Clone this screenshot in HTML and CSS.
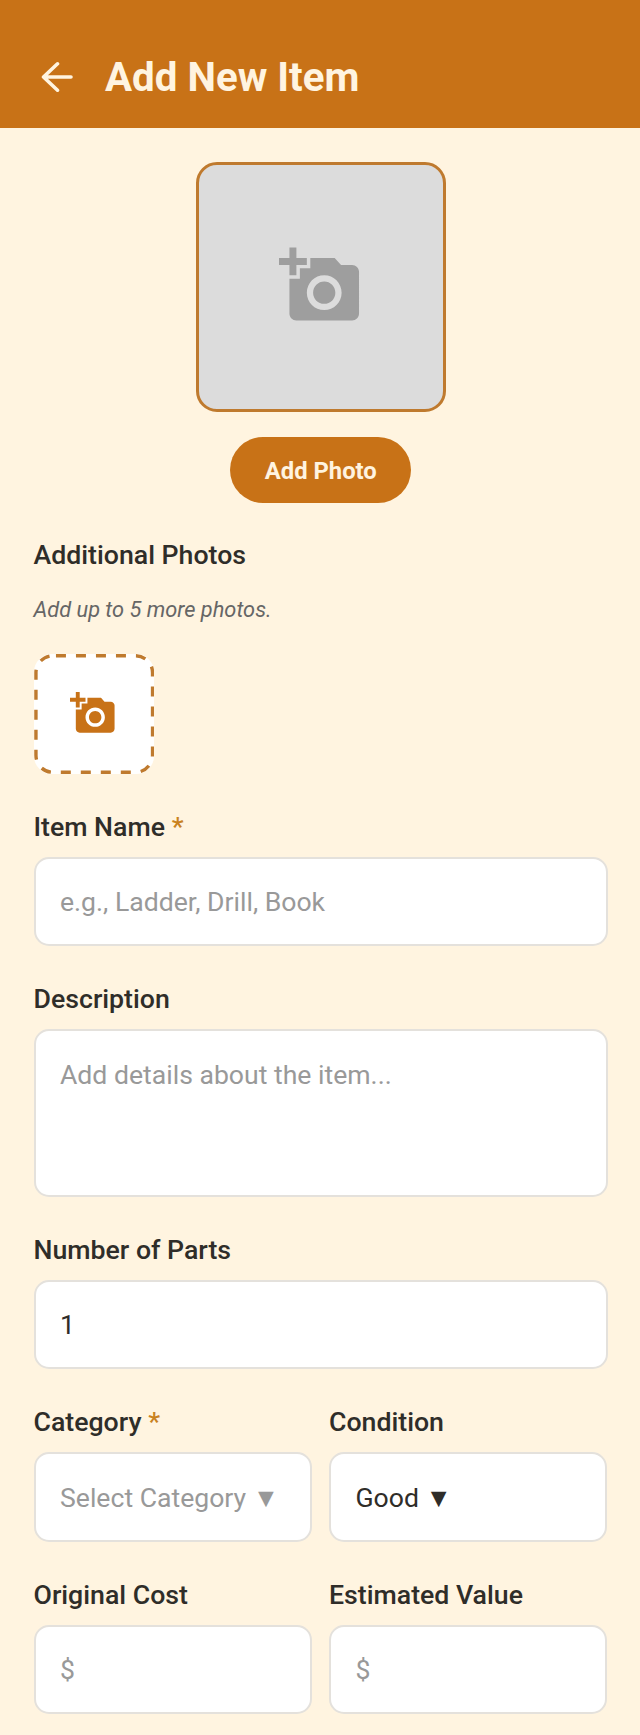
FILE: index.html
```html
<!DOCTYPE html>
<html lang="en">
<head>
<meta charset="utf-8">
<title>Add New Item</title>
<link rel="stylesheet" href="styles.css">
</head>
<body>
<header class="topbar">
  <svg class="back" viewBox="0 0 32 32" aria-hidden="true"><path d="M30 16H2.5M16.5 2.8 2.5 16l14 13.2"/></svg>
  <h1 class="title">Add New Item</h1>
</header>
<main class="form">
  <section class="photo-block">
    <div class="photo-box">
      <svg class="icon icon-lg" viewBox="0 0 24 24" aria-hidden="true"><path d="M3 4V1h2v3h3v2H5v3H3V6H0V4h3zm3 6V7h3V4h7l1.83 2H21c1.1 0 2 .9 2 2v12c0 1.1-.9 2-2 2H5c-1.1 0-2-.9-2-2V10h3zm7 9c2.76 0 5-2.24 5-5s-2.24-5-5-5-5 2.24-5 5 2.24 5 5 5zm-3.2-5c0 1.77 1.43 3.2 3.2 3.2s3.2-1.43 3.2-3.2-1.43-3.2-3.2-3.2-3.2 1.43-3.2 3.2z"/></svg>
    </div>
    <button class="add-btn" type="button">Add Photo</button>
  </section>

  <section class="extra">
    <div class="label">Additional Photos</div>
    <p class="hint">Add up to 5 more photos.</p>
    <div class="thumb-add">
      <svg class="thumb-dash" viewBox="0 0 120 120" aria-hidden="true"><rect x="1.7" y="1.7" width="116.6" height="116.6" rx="17" ry="17"/></svg>
      <svg class="icon icon-sm" viewBox="0 0 24 24" aria-hidden="true"><path d="M3 4V1h2v3h3v2H5v3H3V6H0V4h3zm3 6V7h3V4h7l1.83 2H21c1.1 0 2 .9 2 2v12c0 1.1-.9 2-2 2H5c-1.1 0-2-.9-2-2V10h3zm7 9c2.76 0 5-2.24 5-5s-2.24-5-5-5-5 2.24-5 5 2.24 5 5 5zm-3.2-5c0 1.77 1.43 3.2 3.2 3.2s3.2-1.43 3.2-3.2-1.43-3.2-3.2-3.2-3.2 1.43-3.2 3.2z"/></svg>
    </div>
  </section>

  <div class="field">
    <div class="label">Item Name <span class="req">*</span></div>
    <div class="input placeholder">e.g., Ladder, Drill, Book</div>
  </div>

  <div class="field">
    <div class="label">Description</div>
    <div class="input textarea placeholder">Add details about the item...</div>
  </div>

  <div class="field">
    <div class="label">Number of Parts</div>
    <div class="input">1</div>
  </div>

  <div class="row">
    <div class="field">
      <div class="label">Category <span class="req">*</span></div>
      <div class="input select placeholder">Select Category ▼</div>
    </div>
    <div class="field">
      <div class="label">Condition</div>
      <div class="input select">Good ▼</div>
    </div>
  </div>

  <div class="row">
    <div class="field">
      <div class="label">Original Cost</div>
      <div class="input placeholder">$</div>
    </div>
    <div class="field">
      <div class="label">Estimated Value</div>
      <div class="input placeholder">$</div>
    </div>
  </div>
</main>
</body>
</html>
```
FILE: styles.css
```css
* { box-sizing: border-box; }
html, body { margin: 0; padding: 0; }
body {
  width: 640px;
  height: 1735px;
  overflow: hidden;
  background: #fff4e0;
  font-family: Roboto, "Liberation Sans", sans-serif;
  color: #2f2d29;
}
.topbar {
  height: 128px;
  background: #c87217;
  display: flex;
  align-items: center;
  padding: 25px 0 0 41px;
  gap: 32px;
}
.back {
  width: 32px;
  height: 32px;
  fill: none;
  stroke: #fff4e0;
  stroke-width: 3.6px;
  stroke-linecap: round;
  stroke-linejoin: round;
  flex: none;
}
.title {
  margin: 2px 0 0;
  font-size: 40.3px;
  font-weight: 700;
  line-height: 50px;
  color: #fff4e0;
}
.form { padding: 33.5px 32px 0 33.5px; }
.photo-block {
  display: flex;
  flex-direction: column;
  align-items: center;
  gap: 25px;
}
.photo-box {
  width: 250px;
  height: 250.5px;
  padding: 0 1px 2px 0;
  border: 3.4px solid #bf7a2e;
  border-radius: 21px;
  background: #dcdcdc;
  display: flex;
  align-items: center;
  justify-content: center;
}
.icon { display: block; position: relative; }
.icon-lg { width: 83.5px; height: 83.5px; fill: #9e9e9e; }
.icon-sm { width: 46.5px; height: 46.5px; fill: #c87217; }
.add-btn {
  width: 181px;
  height: 66px;
  padding: 2px 0 0;
  border: 0;
  border-radius: 33px;
  background: #c87217;
  color: #fff4e0;
  font-family: inherit;
  font-size: 23.8px;
  font-weight: 700;
}
.extra { margin-top: 37px; }
.label {
  font-size: 26.7px;
  font-weight: 550;
  line-height: 30px;
  white-space: nowrap;
}
.req { color: #c9821f; }
.hint {
  margin: 26px 0 0;
  font-size: 21.8px;
  font-style: italic;
  line-height: 28px;
  color: #666;
}
.thumb-add {
  position: relative;
  margin-top: 29.7px;
  width: 120.5px;
  height: 120px;
  padding-right: 2px;
  border-radius: 18px;
  background: #fff;
  display: flex;
  align-items: center;
  justify-content: center;
}
.thumb-dash {
  position: absolute;
  inset: 0;
  width: 120.5px;
  height: 120px;
  fill: none;
  stroke: #bf7a2e;
  stroke-width: 3.4px;
  stroke-dasharray: 10 10;
  stroke-dashoffset: -3;
}
.field {
  margin-top: 38px;
  display: flex;
  flex-direction: column;
  gap: 15.5px;
  min-width: 0;
}
.input {
  height: 88.5px;
  background: #fff;
  border: 2px solid #e4e1dc;
  border-radius: 15px;
  padding: 1px 24.5px 0;
  display: flex;
  align-items: center;
  font-size: 26.6px;
  white-space: nowrap;
  color: #2f2d29;
}
.placeholder { color: #999; }
.select { height: 89.5px; padding-top: 2px; }
.textarea {
  height: 167.5px;
  align-items: flex-start;
  padding-top: 28px;
}
.row {
  display: grid;
  grid-template-columns: 278px 278px;
  column-gap: 17.5px;
}
```
